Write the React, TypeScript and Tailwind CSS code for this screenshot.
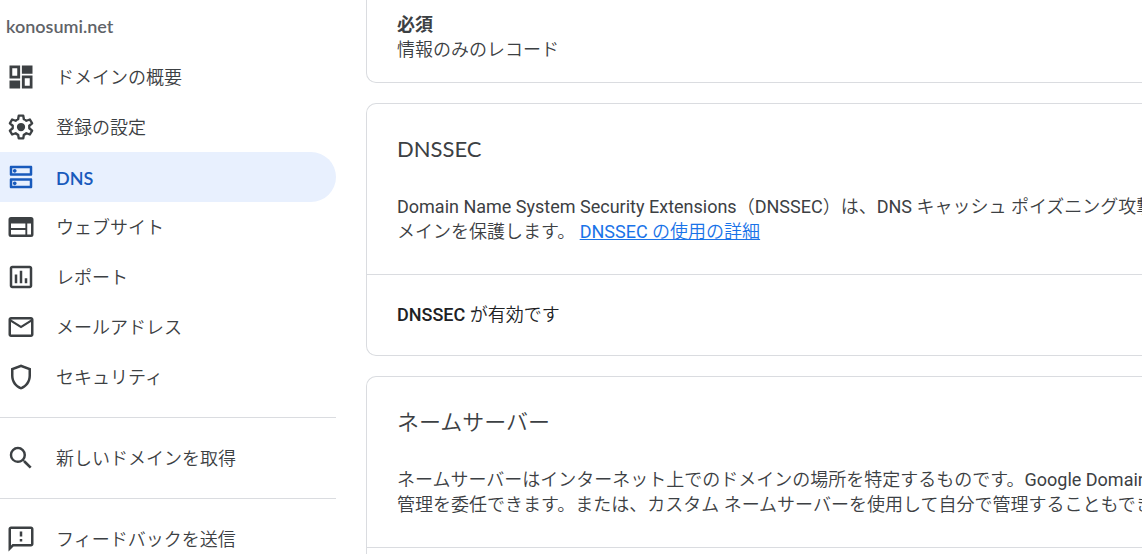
import type { ReactNode } from "react";
import {
  MdMailOutline,
  MdOutlineDns,
  MdOutlineFeedback,
  MdOutlineInsertChart,
  MdOutlineShield,
  MdSearch,
} from "react-icons/md";

function OverviewIcon() {
  return (
    <svg viewBox="0 0 24 24" fill="currentColor" aria-hidden="true">
      <path fillRule="evenodd" d="M2.800 2.800h8.500v10.400H2.800zM5 5v6h4V5zM12.700 10.800h8.500v10.400h-8.500zM15 13v6h4v-6zM12.700 2.800h8.500v6.500h-8.500zM2.800 14.700h8.500v6.500H2.800z" />
    </svg>
  );
}

function WebsiteIcon() {
  return (
    <svg viewBox="0 0 24 24" fill="currentColor" aria-hidden="true">
      <path fillRule="evenodd" d="M4 4h16a2 2 0 0 1 2 2v12a2 2 0 0 1-2 2H4a2 2 0 0 1-2-2V6a2 2 0 0 1 2-2zM4 9.200v3.500h11.500V9.200zM4 14.300V18h11.500v-3.700zM17 9.200V18h3V9.200z" />
    </svg>
  );
}

function GearIcon() {
  return (
    <svg viewBox="0 0 24 24" fill="none" stroke="currentColor" strokeWidth="1.9" strokeLinejoin="round" aria-hidden="true">
      <path d="M10.200 2.900h3.600l.5 2.900c.7.300 1.400.7 2 1.200l2.800-1 1.800 3.100-2.300 1.900c.1.700.1 1.300 0 2l2.300 1.900-1.800 3.100-2.800-1c-.6.5-1.300.9-2 1.200l-.5 2.900h-3.600l-.5-2.900c-.7-.3-1.400-.7-2-1.200l-2.800 1-1.800-3.100L5.400 13c-.1-.7-.1-1.300 0-2L3.100 9.100 4.900 6l2.800 1c.6-.5 1.300-.9 2-1.200z" />
      <circle cx="12" cy="12" r="3.300" fill="currentColor" stroke="none" />
    </svg>
  );
}

function NavItem({ icon, label, active = false }: { icon: ReactNode; label: string; active?: boolean }) {
  return (
    <li>
      <a
        href="#"
        aria-current={active ? "page" : undefined}
        className={`flex h-[50px] items-center gap-5 rounded-r-full pl-1.5 text-lg [&_svg]:size-[30px] ${
          active
            ? "bg-[#e8f0fe] font-['Lato','Noto_Sans_CJK_JP',sans-serif] font-semibold text-[#185abc]"
            : "text-[#3c4043]"
        }`}
      >
        {icon}
        <span className="pt-0.5">{label}</span>
      </a>
    </li>
  );
}

function Card({ title, children, footer }: { title: string; children: ReactNode; footer?: ReactNode }) {
  return (
    <section className="rounded-l-[10px] border border-r-0 border-[#dadce0]">
      <div className="p-[30px]">
        <h2 className="mb-[30px] font-['Lato','Noto_Sans_CJK_JP_DemiLight','Noto_Sans_CJK_JP',sans-serif] text-[22px] leading-[30px]">{title}</h2>
        <p className="whitespace-nowrap">{children}</p>
      </div>
      <div className="border-t border-[#dadce0] px-[30px] pt-[27px] pb-7 text-[#202124]">{footer}</div>
    </section>
  );
}

export default function App() {
  return (
    <div className="flex h-screen overflow-hidden bg-white font-['Roboto','Noto_Sans_CJK_JP_DemiLight','Noto_Sans_CJK_JP',sans-serif] text-lg leading-[25px] text-[#3c4043]">
      <nav className="w-[336px] shrink-0">
        <div className="flex h-[52px] items-center pl-1.5 font-['Lato','Noto_Sans_CJK_JP',sans-serif] font-semibold text-[#5f6368]">
          konosumi.net
        </div>
        <ul>
          <NavItem icon={<OverviewIcon />} label="ドメインの概要" />
          <NavItem icon={<GearIcon />} label="登録の設定" />
          <NavItem icon={<MdOutlineDns />} label="DNS" active />
          <NavItem icon={<WebsiteIcon />} label="ウェブサイト" />
          <NavItem icon={<MdOutlineInsertChart />} label="レポート" />
          <NavItem icon={<MdMailOutline />} label="メールアドレス" />
          <NavItem icon={<MdOutlineShield />} label="セキュリティ" />
        </ul>
        <hr className="my-[15px] border-[#dadce0]" />
        <ul>
          <NavItem icon={<MdSearch />} label="新しいドメインを取得" />
        </ul>
        <hr className="my-[15px] border-[#dadce0]" />
        <ul>
          <NavItem icon={<MdOutlineFeedback />} label="フィードバックを送信" />
        </ul>
      </nav>
      <main className="ml-[30px] flex min-w-0 flex-1 flex-col gap-5">
        <section className="rounded-bl-[10px] border-b border-l border-[#dadce0] px-[30px] pt-3 pb-5">
          <h3 className="font-['Roboto','Noto_Sans_CJK_JP',sans-serif] font-bold">必須</h3>
          <p>情報のみのレコード</p>
        </section>
        <Card
          title="DNSSEC"
          footer={
            <p>
              <span className="font-medium">DNSSEC</span> が有効です
            </p>
          }
        >
          Domain Name System Security Extensions（DNSSEC）は、DNS キャッシュ ポイズニング攻撃
          <br />
          メインを保護します。{" "}
          <a href="#" className="text-[#1a73e8] underline">
            DNSSEC の使用の詳細
          </a>
        </Card>
        <Card title="ネームサーバー">
          ネームサーバーはインターネット上でのドメインの場所を特定するものです。Google Domain
          <br />
          管理を委任できます。または、カスタム ネームサーバーを使用して自分で管理することもでき
        </Card>
      </main>
    </div>
  );
}
